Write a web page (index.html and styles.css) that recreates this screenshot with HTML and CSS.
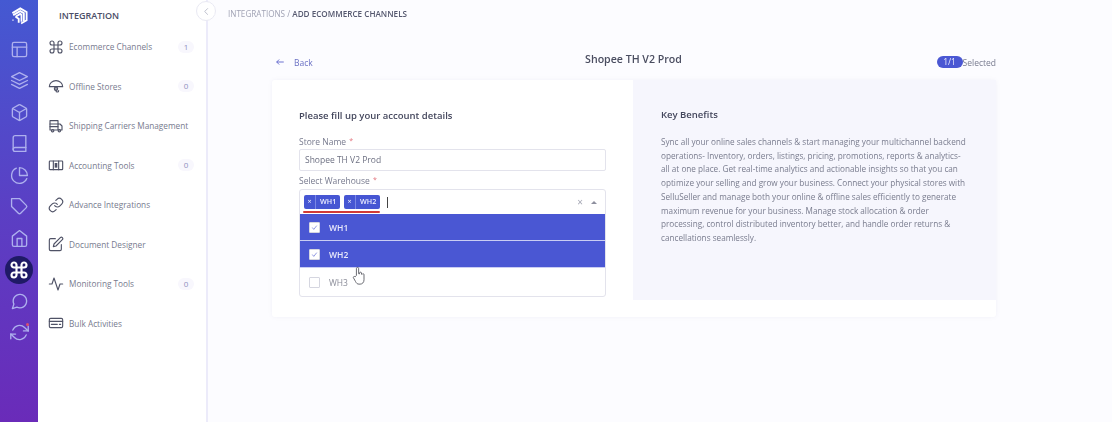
FILE: index.html
```html
<!DOCTYPE html>
<html lang="en">
<head>
<meta charset="utf-8">
<title>Add Ecommerce Channels</title>
<link rel="stylesheet" href="styles.css">
</head>
<body>
<div class="app">
  <nav class="rail">
    <svg class="logo" viewBox="0 0 24 24"><path d="M3 9 13 3l8 4.500V18l-7 4"/><path d="M4 11.500 13 6.500l4.500 2.500v10"/><path d="M7 13.500l6-3.500 1.500 1v9"/><path d="M7 13.500 11 16v5"/><path class="logo-dot" d="M3 17h1.500v1.500H3z"/></svg>
    <svg class="ri" viewBox="0 0 24 24"><rect x="3" y="3" width="18" height="18" rx="2"/><path d="M3 9h18M9 21V9"/></svg>
    <svg class="ri" viewBox="0 0 24 24"><path d="M12 2 2 7l10 5 10-5z"/><path d="m2 17 10 5 10-5M2 12l10 5 10-5"/></svg>
    <svg class="ri" viewBox="0 0 24 24"><path d="M21 16V8a2 2 0 0 0-1-1.730l-7-4a2 2 0 0 0-2 0l-7 4A2 2 0 0 0 3 8v8a2 2 0 0 0 1 1.730l7 4a2 2 0 0 0 2 0l7-4A2 2 0 0 0 21 16z"/><path d="M3.270 6.960 12 12.010l8.730-5.050M12 22.080V12"/></svg>
    <svg class="ri" viewBox="0 0 24 24"><path d="M4 19.500A2.500 2.500 0 0 1 6.500 17H20"/><path d="M6.500 2H20v20H6.500A2.500 2.500 0 0 1 4 19.500v-15A2.500 2.500 0 0 1 6.500 2z"/></svg>
    <svg class="ri" viewBox="0 0 24 24"><path d="M21.210 15.890A10 10 0 1 1 8 2.830"/><path d="M22 12A10 10 0 0 0 12 2v10z"/></svg>
    <svg class="ri" viewBox="0 0 24 24"><path d="m20.590 13.410-7.170 7.170a2 2 0 0 1-2.830 0L2 12V2h10l8.590 8.590a2 2 0 0 1 0 2.820z"/></svg>
    <svg class="ri" viewBox="0 0 24 24"><path d="m3 9 9-7 9 7v11a2 2 0 0 1-2 2H5a2 2 0 0 1-2-2z"/><path d="M9 22V12h6v10"/></svg>
    <span class="ri-active"><svg class="ri-on" viewBox="0 0 24 24"><path d="M18 3a3 3 0 0 0-3 3v12a3 3 0 0 0 3 3 3 3 0 0 0 3-3 3 3 0 0 0-3-3H6a3 3 0 0 0-3 3 3 3 0 0 0 3 3 3 3 0 0 0 3-3V6a3 3 0 0 0-3-3 3 3 0 0 0-3 3 3 3 0 0 0 3 3h12a3 3 0 0 0 3-3 3 3 0 0 0-3-3z"/></svg></span>
    <svg class="ri" viewBox="0 0 24 24"><path d="M21 11.500a8.380 8.380 0 0 1-.9 3.800 8.500 8.500 0 0 1-7.600 4.700 8.380 8.380 0 0 1-3.800-.9L3 21l1.900-5.700a8.380 8.380 0 0 1-.9-3.800 8.500 8.500 0 0 1 4.700-7.600 8.380 8.380 0 0 1 3.800-.9h.5a8.480 8.480 0 0 1 8 8z"/></svg>
    <span class="ri-wrap"><svg class="ri" viewBox="0 0 24 24"><path d="M23 4v6h-6M1 20v-6h6"/><path d="M3.510 9a9 9 0 0 1 14.850-3.360L23 10M1 14l4.640 4.360A9 9 0 0 0 20.490 15"/></svg><i class="dot"></i></span>
  </nav>

  <aside class="side">
    <h2 class="side-title">INTEGRATION</h2>
    <ul class="side-list">
      <li class="side-item"><svg class="si" viewBox="0 0 24 24"><path d="M18 3a3 3 0 0 0-3 3v12a3 3 0 0 0 3 3 3 3 0 0 0 3-3 3 3 0 0 0-3-3H6a3 3 0 0 0-3 3 3 3 0 0 0 3 3 3 3 0 0 0 3-3V6a3 3 0 0 0-3-3 3 3 0 0 0-3 3 3 3 0 0 0 3 3h12a3 3 0 0 0 3-3 3 3 0 0 0-3-3z"/></svg><span class="side-label">Ecommerce Channels</span><span class="count">1</span></li>
      <li class="side-item"><svg class="si" viewBox="0 0 24 24"><path d="M22 13a10 9 0 0 0-20 0zM12 13v6a2 2 0 0 0 4 0"/><circle cx="12" cy="16" r="2.500"/></svg><span class="side-label">Offline Stores</span><span class="count">0</span></li>
      <li class="side-item"><svg class="si" viewBox="0 0 24 24"><path d="M3 4h12v14H3zM15 9h3l3 3v6h-6z"/><circle cx="7" cy="19" r="1.800"/><circle cx="17" cy="19" r="1.800"/><path d="M3 9h12M3 13h12"/></svg><span class="side-label">Shipping Carriers Management</span></li>
      <li class="side-item"><svg class="si" viewBox="0 0 24 24"><rect x="2" y="6" width="20" height="13" rx="1"/><path d="M8 6v13M16 6v13"/><path class="fill" d="M10 9h4v7h-4z"/></svg><span class="side-label">Accounting Tools</span><span class="count">0</span></li>
      <li class="side-item"><svg class="si" viewBox="0 0 24 24"><path d="M10 13a5 5 0 0 0 7.540.54l3-3a5 5 0 0 0-7.070-7.070l-1.720 1.710"/><path d="M14 11a5 5 0 0 0-7.540-.54l-3 3a5 5 0 0 0 7.070 7.070l1.710-1.710"/></svg><span class="side-label">Advance Integrations</span></li>
      <li class="side-item"><svg class="si" viewBox="0 0 24 24"><path d="M11 4H4a2 2 0 0 0-2 2v14a2 2 0 0 0 2 2h14a2 2 0 0 0 2-2v-7"/><path d="M18.500 2.500a2.121 2.121 0 0 1 3 3L12 15l-4 1 1-4z"/></svg><span class="side-label">Document Designer</span></li>
      <li class="side-item"><svg class="si" viewBox="0 0 24 24"><path d="M22 12h-4l-3 9-6-18-3 9H2"/></svg><span class="side-label">Monitoring Tools</span><span class="count">0</span></li>
      <li class="side-item"><svg class="si" viewBox="0 0 24 24"><rect x="2" y="5" width="20" height="14" rx="2"/><path d="M2 9.500h20M5 14h9M17 14h2"/></svg><span class="side-label">Bulk Activities</span></li>
    </ul>
    <span class="collapse"><svg viewBox="0 0 24 24"><path d="m15 5-7 7 7 7"/></svg></span>
  </aside>

  <main class="main">
    <p class="crumbs">INTEGRATIONS / <b>ADD ECOMMERCE CHANNELS</b></p>
    <div class="head">
      <a class="back"><svg viewBox="0 0 24 24"><path d="M21 12H4M10 6l-6 6 6 6"/></svg>Back</a>
      <h1 class="title">Shopee TH V2 Prod</h1>
      <div class="selected"><span class="pill">1/1</span>Selected</div>
    </div>
    <section class="card">
      <div class="form">
        <h3 class="form-title">Please fill up your account details</h3>
        <label class="lbl">Store Name <em>*</em></label>
        <div class="input">Shopee TH V2 Prod</div>
        <label class="lbl lbl2">Select Warehouse <em>*</em></label>
        <div class="select">
          <div class="control">
            <span class="tag"><i>×</i><span>WH1</span></span>
            <span class="tag"><i>×</i><span>WH2</span></span>
            <span class="caret"></span>
            <span class="clear">×</span>
            <span class="arrow"></span>
            <span class="redline"></span>
          </div>
          <div class="opt on"><span class="chk"><svg viewBox="0 0 24 24"><path d="m6 12 4 5 8-10"/></svg></span>WH1</div>
          <div class="opt on"><span class="chk"><svg viewBox="0 0 24 24"><path d="m6 12 4 5 8-10"/></svg></span>WH2</div>
          <div class="opt"><span class="chk"></span>WH3</div>
          <svg class="hand" viewBox="0 0 16 22"><path d="M5 11V3a1.300 1.300 0 0 1 2.600 0v6l1 .1V8a1.200 1.200 0 0 1 2.300 0v1.500l.8.100a1.100 1.100 0 0 1 2.100.4v6c0 3-2 5-4.500 5H8c-2 0-3-1-4-3l-2.500-4.500c-.5-1 1-2 2-1z"/></svg>
        </div>
      </div>
      <div class="info">
        <h3 class="info-title">Key Benefits</h3>
        <p class="info-text">Sync all your online sales channels &amp; start managing your multichannel backend operations- Inventory, orders, listings, pricing, promotions, reports &amp; analytics- all at one place. Get real-time analytics and actionable insights so that you can optimize your selling and grow your business. Connect your physical stores with SelluSeller and manage both your online &amp; offline sales efficiently to generate maximum revenue for your business. Manage stock allocation &amp; order processing, control distributed inventory better, and handle order returns &amp; cancellations seamlessly.</p>
      </div>
    </section>
  </main>
</div>
</body>
</html>
```
FILE: styles.css
```css
* { box-sizing: border-box; }
html, body { margin: 0; height: 100%; overflow: hidden; background: #fcfcff; }
body { font-family: "Open Sans", "Liberation Sans", sans-serif; color: #6b6e80; }

.app { display: flex; height: 422px; filter: blur(0.35px); }

/* icon rail */
.rail {
  width: 38px; flex: none;
  background: linear-gradient(180deg, #4459d2 0%, #5b3fc4 50%, #6a2bb9 100%);
  display: flex; flex-direction: column; align-items: center;
  padding-top: 6px;
}
.logo { width: 19px; height: 19px; fill: none; stroke: #fff; stroke-width: 2.300; margin-bottom: 8.500px; }
.logo-dot { fill: #fff; stroke: none; }
.ri { width: 19px; height: 19px; margin: 6.250px 0; display: block; fill: none; stroke: #aeb0ee; stroke-width: 1.700; stroke-linecap: round; stroke-linejoin: round; }
.ri-active { width: 28px; height: 28px; border-radius: 50%; background: #1f1a66; display: flex; align-items: center; justify-content: center; margin: 2px 0 1.500px; }
.ri-on { width: 20px; height: 20px; fill: none; stroke: #fff; stroke-width: 2.600; }
.ri-wrap { position: relative; display: block; }
.dot { position: absolute; top: 6px; right: 0; width: 3px; height: 3px; border-radius: 50%; background: #d9506f; }

/* secondary sidebar */
.side { width: 170px; flex: none; background: #fff; border-right: 2px solid #ecebfa; position: relative; }
.side-title { margin: 0; padding: 10px 0 0 21px; font-size: 9px; line-height: 12px; font-weight: 600; color: #4b4e68; }
.side-list { list-style: none; margin: 5px 0 0; padding: 0; }
.side-item { height: 39.500px; display: flex; align-items: center; padding: 0 12px 0 10px; font-size: 8.250px; color: #777a8e; }
.si { width: 16px; height: 16px; flex: none; margin-right: 5px; fill: none; stroke: #4f5266; stroke-width: 1.700; stroke-linecap: round; stroke-linejoin: round; }
.si .fill { fill: #4f5266; stroke: none; }
.side-label { flex: 1; white-space: nowrap; }
.count { width: 16px; height: 12px; line-height: 12px; border-radius: 6px; background: #f8f7fd; text-align: center; color: #8f90c0; font-size: 8px; }
.collapse { position: absolute; top: 1px; right: -10px; width: 20px; height: 20px; border-radius: 50%; background: #fff; border: 1px solid #e9e9f3; display: flex; align-items: center; justify-content: center; }
.collapse svg { width: 11px; height: 11px; fill: none; stroke: #b9bbc9; stroke-width: 2; }

/* main */
.main { flex: 1; padding: 8px 116px 0 20px; }
.crumbs { margin: 0; font-size: 8.150px; line-height: 12px; color: #a0a2b4; }
.crumbs b { font-weight: 600; color: #55586f; }
.head { display: flex; align-items: center; height: 38px; margin: 22px 0 0 47px; position: relative; justify-content: space-between; }
.back { display: flex; align-items: center; gap: 9px; font-size: 8.500px; color: #6a70c4; padding-top: 2px; }
.back svg { width: 10px; height: 10px; fill: none; stroke: #5058c6; stroke-width: 2; }
.title { position: absolute; left: 0; right: 4px; margin: 0; top: 10px; text-align: center; font-size: 10.600px; line-height: 14px; font-weight: 600; color: #4a4d60; }
.selected { display: flex; align-items: center; font-size: 8.500px; color: #777a8e; padding-top: 2px; }
.pill { width: 26px; height: 12px; line-height: 12px; border-radius: 6px; background: #4a57d3; color: #e9eafc; text-align: center; }

.card { display: flex; margin-left: 44px; height: 237px; background: #fff; border-radius: 3px; box-shadow: 0 0 4px rgba(120, 120, 170, .08); }
.form { width: 361px; flex: none; padding: 29px 27px 0; }
.form-title { margin: 0 0 12px; font-size: 9.500px; line-height: 14px; font-weight: 600; color: #43465c; }
.lbl { display: block; font-size: 8.500px; line-height: 12px; color: #777a8e; }
.lbl em { font-style: normal; font-size: 7px; vertical-align: 2px; margin-left: 1px; color: #e2737c; }
.lbl2 { margin-top: 3px; }
.input { height: 22px; margin-top: 1px; padding: 0 5px; border: 1px solid #e3e3ec; border-radius: 2px; font-size: 8.500px; line-height: 20px; color: #6d7082; }
.select { position: relative; margin-top: 2px; border: 1px solid #e3e3ec; border-radius: 3px; background: #fff; }
.control { position: relative; height: 24px; display: flex; align-items: center; gap: 4px; padding: 0 4px; }
.tag { display: flex; width: 36px; height: 14px; line-height: 13px; background: #4656d3; color: #eef; font-size: 7.200px; font-weight: 600; border-radius: 2px; }
.tag i { width: 12px; text-align: center; font-style: normal; border-right: 1px solid #7a86e4; font-weight: 400; }
.tag span { padding: 0 3px 0 4px; }
.caret { width: 1px; height: 11px; background: #444; margin-left: 3px; }
.clear { margin-left: auto; font-size: 10px; line-height: 12px; color: #a5a7b4; }
.arrow { margin: 0 4px 0 4px; width: 0; height: 0; border: 3px solid transparent; border-top: 0; border-bottom: 3px solid #8d8f9e; }
.redline { position: absolute; left: 3px; bottom: 1px; width: 77px; height: 2.500px; border-radius: 2px; background: #d23a35; }
.opt { height: 27px; display: flex; align-items: center; gap: 9px; padding-left: 9px; font-size: 8.500px; color: #8a8c98; }
.opt:last-of-type { height: 28px; }
.opt.on { background: #4a57d3; color: #e8e9fa; font-weight: 600; border-bottom: 1px solid #c9cdf3; }
.chk { width: 11px; height: 11px; border: 1px solid #d5d6e0; border-radius: 1px; background: #fff; display: flex; }
.chk svg { width: 9px; height: 9px; fill: none; stroke: #6d78d8; stroke-width: 2; }
.hand { position: absolute; left: 52px; top: 76px; width: 14px; height: 19px; fill: #fff; stroke: #55565e; stroke-width: 1; }

.info { flex: 1; height: 220px; background: #f6f6fd; padding: 28px 28px 0; }
.info-title { margin: 0 0 13px; font-size: 9.500px; line-height: 14px; font-weight: 600; color: #43465c; }
.info-text { margin: 0; font-size: 8.200px; line-height: 13.700px; color: #797c8e; }
```
